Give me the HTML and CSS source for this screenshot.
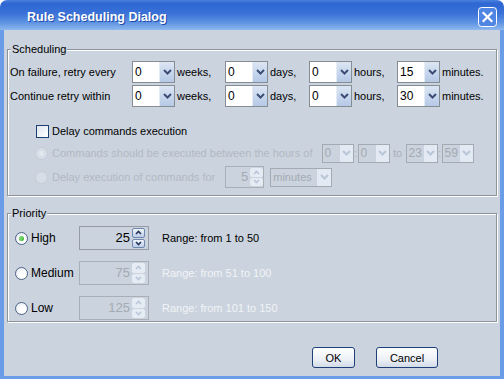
FILE: index.html
```html
<!DOCTYPE html>
<html lang="en">
<head>
    <meta charset="UTF-8">
    <title>Rule Scheduling Dialog</title>
    <link rel="stylesheet" href="styles.css">
</head>
<body>
    <div class="window">
        <div class="titlebar">
            <span class="title">Rule Scheduling Dialog</span>
            <span class="close-btn">
                <svg width="19" height="20" viewBox="0 0 19 20">
                    <rect x="0.5" y="0.5" width="18" height="19" rx="3" fill="#4f86e4" stroke="#ffffff"/>
                    <path d="M5.5 6 L13.5 14 M13.5 6 L5.5 14" stroke="#ffffff" stroke-width="2.2" stroke-linecap="square"/>
                </svg>
            </span>
        </div>

        <div class="panel">
            <!-- Scheduling -->
            <fieldset class="group sched">
                <legend>Scheduling</legend>
                <div class="retry-grid">
                    <span class="lbl">On failure, retry every</span>
                    <span class="combo"><span class="field">0</span><span class="arrow"><svg width="9" height="6" viewBox="0 0 9 6"><polyline points="1,1 4.5,4.5 8,1" fill="none" stroke="#3c4f74" stroke-width="2"/></svg></span></span>
                    <span class="unit">weeks,</span>
                    <span class="combo"><span class="field">0</span><span class="arrow"><svg width="9" height="6" viewBox="0 0 9 6"><polyline points="1,1 4.5,4.5 8,1" fill="none" stroke="#3c4f74" stroke-width="2"/></svg></span></span>
                    <span class="unit">days,</span>
                    <span class="combo"><span class="field">0</span><span class="arrow"><svg width="9" height="6" viewBox="0 0 9 6"><polyline points="1,1 4.5,4.5 8,1" fill="none" stroke="#3c4f74" stroke-width="2"/></svg></span></span>
                    <span class="unit">hours,</span>
                    <span class="combo"><span class="field">15</span><span class="arrow"><svg width="9" height="6" viewBox="0 0 9 6"><polyline points="1,1 4.5,4.5 8,1" fill="none" stroke="#3c4f74" stroke-width="2"/></svg></span></span>
                    <span class="unit">minutes.</span>

                    <span class="lbl">Continue retry within</span>
                    <span class="combo"><span class="field">0</span><span class="arrow"><svg width="9" height="6" viewBox="0 0 9 6"><polyline points="1,1 4.5,4.5 8,1" fill="none" stroke="#3c4f74" stroke-width="2"/></svg></span></span>
                    <span class="unit">weeks,</span>
                    <span class="combo"><span class="field">0</span><span class="arrow"><svg width="9" height="6" viewBox="0 0 9 6"><polyline points="1,1 4.5,4.5 8,1" fill="none" stroke="#3c4f74" stroke-width="2"/></svg></span></span>
                    <span class="unit">days,</span>
                    <span class="combo"><span class="field">0</span><span class="arrow"><svg width="9" height="6" viewBox="0 0 9 6"><polyline points="1,1 4.5,4.5 8,1" fill="none" stroke="#3c4f74" stroke-width="2"/></svg></span></span>
                    <span class="unit">hours,</span>
                    <span class="combo"><span class="field">30</span><span class="arrow"><svg width="9" height="6" viewBox="0 0 9 6"><polyline points="1,1 4.5,4.5 8,1" fill="none" stroke="#3c4f74" stroke-width="2"/></svg></span></span>
                    <span class="unit">minutes.</span>
                </div>

                <div class="check-row">
                    <span class="checkbox"></span>
                    <span>Delay commands execution</span>
                </div>

                <div class="opt-row hours-row">
                    <span class="radio off"><span class="dot"></span></span>
                    <span class="dis-text">Commands should be executed between the hours of</span>
                    <span class="combo small off first"><span class="field">0</span><span class="arrow"><svg width="9" height="6" viewBox="0 0 9 6"><polyline points="1,1 4.5,4.5 8,1" fill="none" stroke="#b9c6d8" stroke-width="2"/></svg></span></span>
                    <span class="sep">:</span>
                    <span class="combo small off"><span class="field">0</span><span class="arrow"><svg width="9" height="6" viewBox="0 0 9 6"><polyline points="1,1 4.5,4.5 8,1" fill="none" stroke="#b9c6d8" stroke-width="2"/></svg></span></span>
                    <span class="sep to">to</span>
                    <span class="combo small off"><span class="field">23</span><span class="arrow"><svg width="9" height="6" viewBox="0 0 9 6"><polyline points="1,1 4.5,4.5 8,1" fill="none" stroke="#b9c6d8" stroke-width="2"/></svg></span></span>
                    <span class="sep">:</span>
                    <span class="combo small off"><span class="field">59</span><span class="arrow"><svg width="9" height="6" viewBox="0 0 9 6"><polyline points="1,1 4.5,4.5 8,1" fill="none" stroke="#b9c6d8" stroke-width="2"/></svg></span></span>
                </div>

                <div class="opt-row delay-row">
                    <span class="radio off"></span>
                    <span class="dis-text">Delay execution of commands for</span>
                    <span class="spinner small off">
                        <span class="value">5</span>
                        <span class="spin-btns">
                            <span class="spin-btn"><svg width="7" height="5" viewBox="0 0 7 5"><polyline points="1,4 3.5,1.5 6,4" fill="none" stroke="#b9c6d8" stroke-width="1.6"/></svg></span>
                            <span class="spin-btn"><svg width="7" height="5" viewBox="0 0 7 5"><polyline points="1,1 3.5,3.5 6,1" fill="none" stroke="#b9c6d8" stroke-width="1.6"/></svg></span>
                        </span>
                    </span>
                    <span class="combo wide off"><span class="field">minutes</span><span class="arrow"><svg width="9" height="6" viewBox="0 0 9 6"><polyline points="1,1 4.5,4.5 8,1" fill="none" stroke="#b9c6d8" stroke-width="2"/></svg></span></span>
                </div>
            </fieldset>

            <!-- Priority -->
            <fieldset class="group prio">
                <legend>Priority</legend>
                <div class="prio-row">
                    <span class="radio on"><span class="dot"></span></span>
                    <span class="prio-name">High</span>
                    <span class="spinner">
                        <span class="value">25</span>
                        <span class="spin-btns">
                            <span class="spin-btn"><svg width="7" height="5" viewBox="0 0 7 5"><polyline points="1,4 3.5,1.5 6,4" fill="none" stroke="#24365a" stroke-width="1.6"/></svg></span>
                            <span class="spin-btn"><svg width="7" height="5" viewBox="0 0 7 5"><polyline points="1,1 3.5,3.5 6,1" fill="none" stroke="#24365a" stroke-width="1.6"/></svg></span>
                        </span>
                    </span>
                    <span class="range">Range: from 1 to 50</span>
                </div>
                <div class="prio-row">
                    <span class="radio"></span>
                    <span class="prio-name">Medium</span>
                    <span class="spinner off">
                        <span class="value">75</span>
                        <span class="spin-btns">
                            <span class="spin-btn"><svg width="7" height="5" viewBox="0 0 7 5"><polyline points="1,4 3.5,1.5 6,4" fill="none" stroke="#b9c6d8" stroke-width="1.6"/></svg></span>
                            <span class="spin-btn"><svg width="7" height="5" viewBox="0 0 7 5"><polyline points="1,1 3.5,3.5 6,1" fill="none" stroke="#b9c6d8" stroke-width="1.6"/></svg></span>
                        </span>
                    </span>
                    <span class="range off">Range: from 51 to 100</span>
                </div>
                <div class="prio-row">
                    <span class="radio"></span>
                    <span class="prio-name">Low</span>
                    <span class="spinner off">
                        <span class="value">125</span>
                        <span class="spin-btns">
                            <span class="spin-btn"><svg width="7" height="5" viewBox="0 0 7 5"><polyline points="1,4 3.5,1.5 6,4" fill="none" stroke="#b9c6d8" stroke-width="1.6"/></svg></span>
                            <span class="spin-btn"><svg width="7" height="5" viewBox="0 0 7 5"><polyline points="1,1 3.5,3.5 6,1" fill="none" stroke="#b9c6d8" stroke-width="1.6"/></svg></span>
                        </span>
                    </span>
                    <span class="range off">Range: from 101 to 150</span>
                </div>
            </fieldset>

            <div class="buttons">
                <button class="btn ok">OK</button>
                <button class="btn cancel">Cancel</button>
            </div>
        </div>
    </div>
</body>
</html>
```

FILE: styles.css
```css
body {
    margin: 0;
    background: #ffffff;
    font-family: 'Liberation Sans', Arial, sans-serif;
    font-size: 11px;
    color: #000000;
}
.window {
    width: 504px;
    height: 379px;
    display: flex;
    flex-direction: column;
}
/* Заголовок окна */
.titlebar {
    height: 30px;
    flex: none;
    display: flex;
    align-items: center;
    justify-content: space-between;
    padding: 0 7px 0 27px;
    box-sizing: border-box;
    border-radius: 7px 7px 0 0;
    background: linear-gradient(#4a80dd 0%, #2e66d3 12%, #3a72d8 45%, #5e93e2 75%, #8db8ef 100%);
}
.title {
    color: #ffffff;
    font-family: 'Liberation Sans', Arial, sans-serif;
    font-weight: bold;
    font-size: 12.5px;
    text-shadow: 1px 1px 0 #1d4aa8;
    margin-top: 4px;
}
.close-btn {
    display: flex;
    margin-top: 3px;
}
.panel {
    flex: 1;
    background: #cbd3de;
    border: 4px solid #6b9ce8;
    border-top: none;
    border-bottom-width: 3px;
    padding: 12px 3px 0 3px;
    display: flex;
    flex-direction: column;
}
/* Рамки групп */
.group {
    margin: 0;
    padding: 5px 2px 7px 2px;
    border: 1px solid #8e939a;
    box-shadow: inset 1px 1px 0 #ffffff, 1px 1px 0 #ffffff;
}
.group legend {
    padding: 0 1px;
    margin-left: 1px;
    line-height: 14px;
    background: #cbd3de;
}
.retry-grid {
    display: grid;
    grid-template-columns: 122px 43px 50px 43px 41px 43px 45px 43px auto;
    grid-auto-rows: 22px;
    row-gap: 2px;
    align-items: center;
    white-space: nowrap;
}
.unit {
    padding-left: 2px;
}
.combo {
    display: flex;
    width: 43px;
    height: 22px;
    box-sizing: border-box;
    border: 1px solid #878d95;
    background: #ffffff;
}
.combo .field {
    flex: 1;
    padding-left: 2px;
    font-size: 12px;
    line-height: 20px;
}
.combo .arrow {
    width: 14px;
    display: flex;
    align-items: center;
    justify-content: center;
    border-left: 1px solid #e6ecf4;
    background: linear-gradient(#dce6f4, #b5c9e6);
}
.combo.off {
    background: #cbd3de;
    border-color: #a4aab2;
    color: #a4aab2;
}
.combo.off .arrow {
    background: #e3eaf4;
    border-left-color: #cbd3de;
}
.combo.small {
    width: 32px;
    height: 19px;
}
.combo.small .field {
    line-height: 17px;
}
.combo.small .arrow {
    width: 13px;
}
.combo.small.first {
    margin-left: 9px;
}
.combo.wide {
    width: 62px;
    height: 19px;
    margin-left: 6px;
}
.combo.wide .field {
    line-height: 17px;
    font-size: 11px;
}
/* Флажок и переключатели */
.check-row {
    display: flex;
    align-items: center;
    height: 20px;
    margin-top: 14px;
    padding-left: 26px;
    gap: 3px;
}
.checkbox {
    width: 13px;
    height: 13px;
    box-sizing: border-box;
    border: 1px solid #1c3f73;
    background: linear-gradient(135deg, #dfe6ef, #ffffff);
}
.opt-row {
    display: flex;
    align-items: center;
    padding-left: 25px;
    white-space: nowrap;
}
.hours-row {
    height: 20px;
    margin-top: 2px;
}
.delay-row {
    height: 22px;
    margin-top: 3px;
}
.dis-text {
    color: #b2b9c3;
    margin-left: 4px;
}
.sep {
    color: #a9b0ba;
    width: 4px;
    text-align: center;
}
.sep.to {
    width: 16px;
}
.radio {
    width: 13px;
    height: 13px;
    box-sizing: border-box;
    border-radius: 50%;
    border: 1px solid #4e6487;
    background: radial-gradient(circle at 65% 65%, #ffffff 30%, #dce3ec 100%);
    display: flex;
    align-items: center;
    justify-content: center;
}
.radio.off {
    border-color: #c5ccd6;
    background: #d6dde6;
}
.radio .dot {
    width: 5px;
    height: 5px;
    border-radius: 50%;
    background: radial-gradient(circle at 40% 40%, #8ae27c, #23a31f);
}
.radio.off .dot {
    background: #e3e8ee;
}
/* Счётчики */
.spinner {
    display: flex;
    width: 70px;
    height: 24px;
    box-sizing: border-box;
    border: 1px solid #979ca4;
    background: #cbd3de;
}
.spinner .value {
    flex: 1;
    text-align: right;
    font-size: 13px;
    line-height: 22px;
    padding-right: 1px;
}
.spin-btns {
    width: 13px;
    margin: 1px 3px 1px 1px;
    display: flex;
    flex-direction: column;
    gap: 1px;
}
.spin-btn {
    flex: 1;
    display: flex;
    align-items: center;
    justify-content: center;
    border: 1px solid #6f87ad;
    border-radius: 2px;
    background: linear-gradient(#f1f5fb, #bccde8);
}
.spinner.off {
    border-color: #a9afb7;
}
.spinner.off .value {
    color: #a4aab2;
}
.spinner.off .spin-btn {
    border-color: #e6ecf4;
    background: #e6ecf4;
}
.spinner.small {
    width: 39px;
    height: 22px;
    margin-left: 10px;
}
.spinner.small .value {
    line-height: 20px;
}
.spinner.small .spin-btns {
    margin-right: 0;
}
/* Приоритет */
.prio {
    margin-top: 10px;
    padding: 6px 2px 1px 2px;
}
.prio-row {
    display: flex;
    align-items: center;
    height: 24px;
    padding-left: 5px;
}
.prio-row + .prio-row {
    margin-top: 11px;
}
.prio-name {
    width: 48px;
    padding-left: 3px;
    font-size: 12px;
}
.range {
    margin-left: 13px;
}
.range.off {
    color: #f1f3f6;
}
/* Кнопки */
.buttons {
    display: flex;
    justify-content: flex-end;
    gap: 21px;
    margin-top: 25px;
    padding-right: 59px;
}
.btn {
    height: 21px;
    font-family: 'Liberation Sans', Arial, sans-serif;
    font-size: 11px;
    border: 1px solid #1f3f78;
    border-radius: 3px;
    background: linear-gradient(#ffffff, #ecf0f6 60%, #d3dbe7);
    padding: 0;
}
.btn.ok {
    width: 43px;
}
.btn.cancel {
    width: 62px;
}
```
